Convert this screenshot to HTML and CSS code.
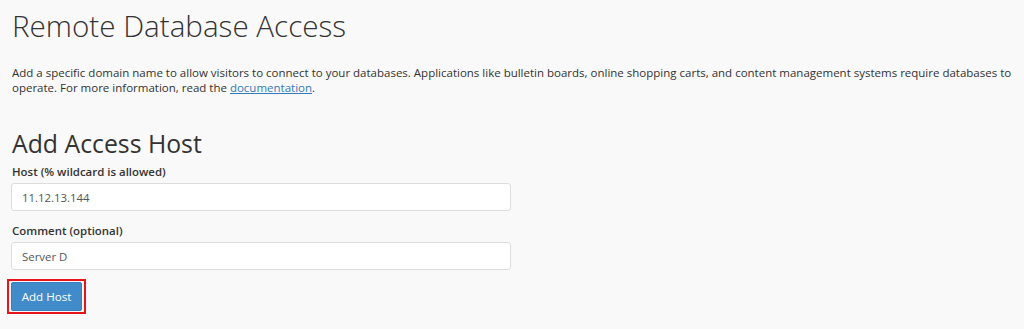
FILE: index.html
```html
<!DOCTYPE html>
<html>
<head>
<meta charset="utf-8">
<link rel="stylesheet" href="styles.css">
</head>
<body>
<div class="page">
  <h1 class="title">Remote Database Access</h1>
  <p class="intro">Add a specific domain name to allow visitors to connect to your databases. Applications like bulletin boards, online shopping carts, and content management systems require databases to operate. For more information, read the <a href="#" class="link">documentation</a>.</p>
  <h2 class="section-title">Add Access Host</h2>
  <div class="field">
    <label class="label">Host (% wildcard is allowed)</label>
    <input class="input" type="text" value="11.12.13.144">
  </div>
  <div class="field">
    <label class="label">Comment (optional)</label>
    <input class="input" type="text" value="Server D">
  </div>
  <div class="actions">
    <span class="highlight"><button class="btn" type="button">Add Host</button></span>
  </div>
</div>
</body>
</html>
```
FILE: styles.css
```css
html, body {
  margin: 0;
  padding: 0;
  background: #f9f9f9;
}
body {
  font-family: "Open Sans", "Liberation Sans", sans-serif;
  font-size: 11.5px;
  color: #333;
}
.page {
  padding: 8px 11px 0 11px;
}
.title {
  margin: 0;
  font-size: 29.6px;
  font-weight: 300;
  line-height: 36px;
  color: #333;
  padding-left: 1px;
}
.intro {
  margin: 21px 0 0 0;
  line-height: 15px;
  font-size: 11.5px;
  padding-left: 1px;
}
.link {
  color: #337ab7;
  text-decoration: underline;
}
.section-title {
  margin: 34px 0 0 0;
  font-size: 24.8px;
  font-weight: 400;
  line-height: 28px;
  padding-left: 1px;
}
.field {
  display: flex;
  flex-direction: column;
}
.label {
  font-weight: 600;
  font-size: 11.45px;
  line-height: 17px;
  padding-left: 1px;
  margin: 0 0 3px 0;
}
.field:first-of-type .label {
  margin-top: 6px;
}
.input {
  box-sizing: border-box;
  width: 500px;
  height: 28px;
  border: 1px solid #ddd;
  border-radius: 3px;
  background: #fff;
  padding: 4px 10px;
  font-family: inherit;
  font-size: 11.4px;
  color: #555;
  margin: 0 0 11px 0;
}
.actions {
  margin-top: -2px;
  margin-left: -4px;
}
.highlight {
  display: inline-block;
  border: 2px solid #e8141c;
  padding: 1px 2px;
}
.btn {
  display: block;
  background: #428bca;
  color: #fff;
  border: 1px solid #3a7fbd;
  border-radius: 2px;
  font-family: inherit;
  font-size: 11.6px;
  height: 29px;
  width: 71px;
  padding: 0;
}
```
